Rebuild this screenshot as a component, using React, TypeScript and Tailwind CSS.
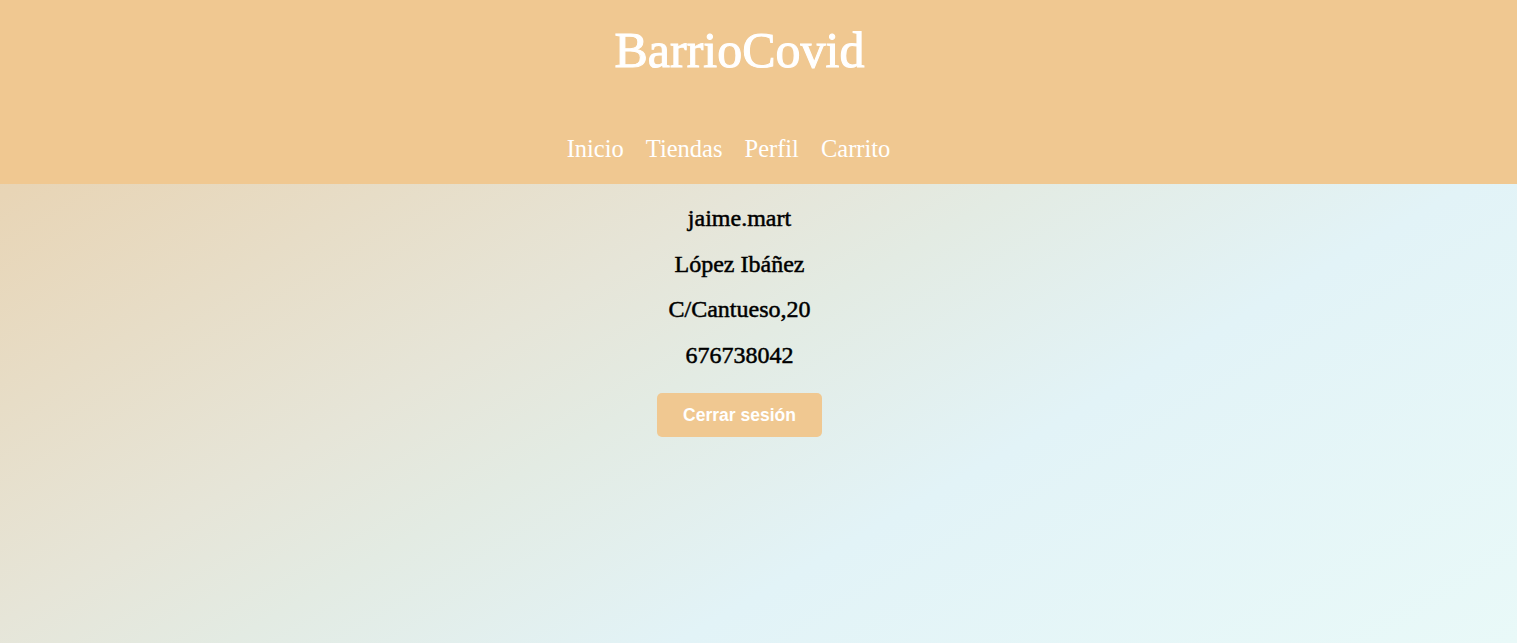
import React from "react";

const line =
  "text-[24px] leading-[28px] text-black [-webkit-text-stroke:0.5px_black]";

export default function App() {
  return (
    <div className="min-h-[643px] w-full bg-[linear-gradient(150deg,#e9d2b0_0%,#e8d5b6_13%,#e6e5d8_41%,#e3ebe3_51%,#e2f3f7_68%,#e9f9f8_100%)] font-['Liberation_Serif',serif]">
      <header className="h-[184px] bg-[#f0c891] flex flex-col items-center pr-[38px]">
        <h1 className="mt-[22px] text-[50px] leading-[56px] text-white [-webkit-text-stroke:1px_white]">
          BarrioCovid
        </h1>
        <nav className="mt-[56px] flex text-[24.5px] leading-[30px] text-white">
          <a className="mr-[22px]">Inicio</a>
          <a className="mr-[22px]">Tiendas</a>
          <a className="mr-[22px]">Perfil</a>
          <a className="mr-[22px]">Carrito</a>
        </nav>
      </header>
      <main className="flex flex-col items-center pt-[20px] pr-[38px]">
        <p className={line}>jaime.mart</p>
        <p className={`mt-[17.5px] ${line}`}>López Ibáñez</p>
        <p className={`mt-[17.5px] ${line}`}>C/Cantueso,20</p>
        <p className={`mt-[17.5px] ${line}`}>676738042</p>
        <button className="mt-[24.5px] w-[165px] h-[44px] rounded-[5px] bg-[#f0c891] text-white font-bold text-[17.5px] font-['Liberation_Sans',sans-serif]">
          Cerrar sesión
        </button>
      </main>
    </div>
  );
}
